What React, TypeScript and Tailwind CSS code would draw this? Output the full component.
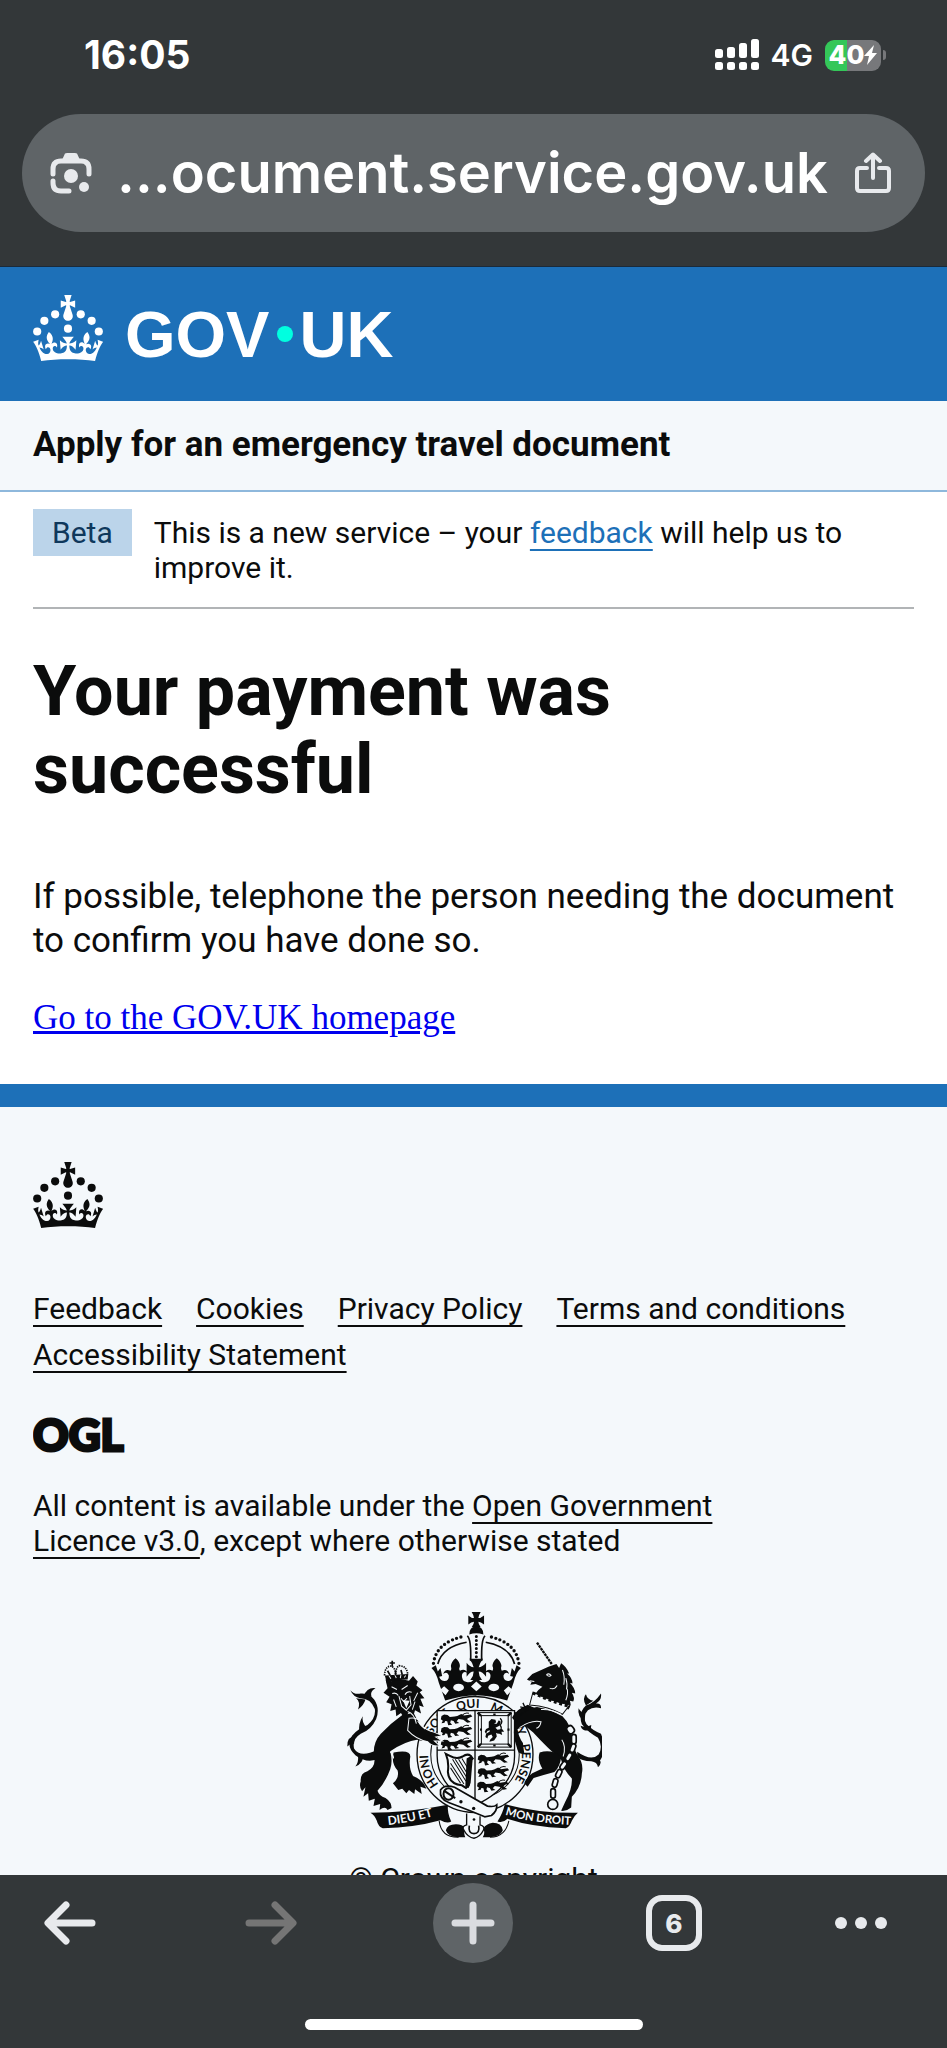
import {ReactNode} from "react";

const footerLinks = ["Feedback", "Cookies", "Privacy Policy", "Terms and conditions", "Accessibility Statement"];

const linkStyle = "underline decoration-2 underline-offset-[6px]";

function Crown() {
    return (
        <svg viewBox="0 0 63.4 60" className="w-[70px] h-[66px] shrink-0" fill="currentColor" aria-hidden="true">
            <circle cx="20" cy="17.6" r="3.7"/>
            <circle cx="10.2" cy="23.5" r="3.7"/>
            <circle cx="3.7" cy="33.2" r="3.7"/>
            <circle cx="31.7" cy="30.6" r="3.7"/>
            <circle cx="43.3" cy="17.6" r="3.7"/>
            <circle cx="53.2" cy="23.5" r="3.7"/>
            <circle cx="59.7" cy="33.2" r="3.7"/>
            <path
                d="M33.1,9.8c.2-.1.3-.3.5-.5l4.6,2.4v-6.8l-4.6,1.5c-.1-.2-.3-.3-.5-.5l1.9-5.9h-6.7l1.9,5.9c-.2.1-.3.3-.5.5l-4.6-1.5v6.8l4.6-2.4c.1.2.3.3.5.5l-2.6,8c-.9,2.8,1.2,5.7,4.1,5.7h0c3,0,5.1-2.9,4.1-5.7l-2.6-8ZM37,37.9s-3.4,3.8-4.1,6.1c2.2,0,4.2-.5,6.4-2.8l-.7,8.5c-2-2.8-4.4-4.1-5.7-3.8.1,3.1.5,6.7,5.8,7.2,3.7.3,6.7-1.5,7-3.8.4-2.6-2-4.3-3.7-1.6-1.4-4.5,2.4-6.1,4.9-3.2-1.9-4.5-1.8-7.7,2.4-10.9,3,4,2.6,7.3-1.2,11.1,2.4-1.3,6.2,0,4,4.6-1.2-2.8-3.7-2.2-4.2.2-.3,1.7.7,3.7,3,4.2,1.9.3,4.7-.9,7-5.9-1.3,0-2.4.7-3.9,1.7l2.4-8c.6,2.3,1.4,3.7,2.2,4.5.6-1.6.5-2.8,0-5.3l5,1.8c-2.6,3.6-5.2,8.7-7.3,17.5-7.4-1.1-15.7-1.7-24.5-1.7h0c-8.8,0-17.1.6-24.5,1.7-2.1-8.9-4.7-13.9-7.3-17.5l5-1.8c-.5,2.5-.6,3.7,0,5.3.8-.8,1.6-2.3,2.2-4.5l2.4,8c-1.5-1-2.6-1.7-3.9-1.7,2.3,5,5.2,6.2,7,5.9,2.3-.4,3.3-2.4,3-4.2-.5-2.4-3-3.1-4.2-.2-2.2-4.6,1.6-6,4-4.6-3.7-3.7-4.2-7.1-1.2-11.1,4.2,3.2,4.3,6.4,2.4,10.9,2.5-2.8,6.3-1.3,4.9,3.2-1.8-2.7-4.1-1-3.7,1.6.3,2.3,3.3,4.1,7,3.8,5.4-.5,5.7-4.2,5.8-7.2-1.3-.2-3.7,1-5.7,3.8l-.7-8.5c2.2,2.3,4.2,2.7,6.4,2.8-.7-2.3-4.1-6.1-4.1-6.1h10.6Z"/>
        </svg>
    );
}

// Small walking lion used in the shield quarters
function Passant({x, y}: { x: number; y: number }) {
    return (
        <g transform={`translate(${x} ${y})`}>
            <path
                d="M0 2l8-4 10 1 7 6 14-1 8-2 12-6 8 5 20-3 5 6-10 3-6 4 4 4 8 5-11 2-12-9-14-2-6 7 8 5-12 2-5-8-8-2-2 7 6 6-12 2-3-12-6-1-2 5-9 2 4-8-6-4z"/>
            <path d="M62 0q8-10 20-6" fill="none" stroke="#0b0c0c" strokeWidth="3"/>
        </g>
    );
}

// Left half of the large crown, mirrored to give the right half
function CrownHalf() {
    return (
        <g>
            <path d="M309 192Q318 128 402 111" fill="none" stroke="#0b0c0c" strokeWidth="10" strokeLinecap="round"
                  strokeDasharray="0 13.5"/>
            <path d="M322 194Q336 142 408 129" fill="none" stroke="#0b0c0c" strokeWidth="5"/>
            <path d="M410 110q12 10 10 74" fill="none" stroke="#0b0c0c" strokeWidth="5"/>
            <path
                d="M437 305V240H430Q421 251 408 248Q392 244 394 226Q398 212 412 222Q404 206 388 214Q384 208 388 200Q388 188 375 177Q362 188 361 200Q364 208 360 214Q344 206 338 224Q350 214 355 228Q356 244 342 245Q331 245 326 232L335 230L330 206L322 216L316 198L303 206Q318 220 325 250L344 303Q390 288 437 287Z"/>
        </g>
    );
}

function RoyalArms() {
    return (
        <svg viewBox="48 36 764 680" className="w-64 h-[228px]" fill="#0b0c0c" role="img"
             aria-label="Royal coat of arms">
            <defs>
                <path id="garter" d="M325 553A140 140 0 1 1 481 596"/>
                <path id="mottoLeft" d="M174 674Q250 666 336 640"/>
                <path id="mottoRight" d="M523 644Q600 668 716 674"/>
            </defs>

            {/* garter belt */}
            <circle cx="433" cy="464" r="173" fill="#f4f8fb" stroke="#0b0c0c" strokeWidth="4"/>
            <text className="font-['Lato'] font-bold text-[36px]">
                <textPath href="#garter" startOffset="0">HONI</textPath>
                <textPath href="#garter" startOffset="155">SOIT</textPath>
                <textPath href="#garter" startOffset="262">QUI</textPath>
                <textPath href="#garter" startOffset="360">MAL</textPath>
                <textPath href="#garter" startOffset="458">Y</textPath>
                <textPath href="#garter" startOffset="505">PENSE</textPath>
            </text>
            <circle cx="433" cy="464" r="132" fill="#f4f8fb" stroke="#0b0c0c" strokeWidth="3"/>

            {/* shield */}
            <path d="M320 333H551V468Q552 560 433 616Q320 560 320 468Z" fill="#f4f8fb" stroke="#0b0c0c"
                  strokeWidth="4"/>
            <path d="M433 333V616M320 451H551" stroke="#0b0c0c" strokeWidth="4"/>
            <Passant x={333} y={347}/>
            <Passant x={333} y={384}/>
            <Passant x={333} y={422}/>
            <Passant x={443} y={467}/>
            <Passant x={443} y={507}/>
            <Passant x={441} y={547}/>
            <rect x="443" y="339" width="98" height="103" fill="none" stroke="#0b0c0c" strokeWidth="3"/>
            <rect x="452" y="348" width="80" height="85" fill="none" stroke="#0b0c0c" strokeWidth="3"/>
            <path d="M441 339l10 10m90-10l-10 10m-90 93l10-10m90 10l-10-10M448 390h6M530 390h6M491 342v6M491 434v6"
                  stroke="#0b0c0c" strokeWidth="7"/>
            <path
                d="M474 366l8-8 12 2 2 8-6 4 8 0 6-10 6 4-4 12-12 6 6 6 14-2 6 8-8 0 2 10-8-4-10-2 2 10-8 12-14 4 2-6 8-8-4-8-10 4-2 8-6-4 2-10 10-6 2-4-8 2-4 8-4-6 4-8 8-4z"/>
            <path d="M500 400Q518 390 508 376Q518 366 508 356" fill="none" stroke="#0b0c0c" strokeWidth="4"/>

            {/* harp */}
            <path d="M346 462l12 6q20 12 38 2 14-10 24-2l6 8-10 8-2 72-8 8-12-8q-40-4-42-40 4-30-6-54z" fill="#f4f8fb"
                  stroke="#0b0c0c" strokeWidth="6"/>
            <path d="M366 478l40 66M360 490l40 62M360 504l30 46M374 478l34 54M384 478l24 40M394 476l16 26"
                  stroke="#0b0c0c" strokeWidth="3"/>
            <path d="M408 476l14-8 4 10-6 70-6 16-10-4z"/>

            {/* crown */}
            <CrownHalf/>
            <g transform="translate(873 0) scale(-1 1)"><CrownHalf/></g>
            <path
                d="M423 39H450Q443 50 443 57Q450 57 460 49V76Q450 68 443 68Q443 76 450 84H423Q430 76 430 68Q422 68 413 76V49Q422 57 430 57Q430 50 423 39Z"/>
            <path d="M416 106Q416 82 437 82Q458 82 458 106Q447 102 437 102Q426 102 416 106Z"/>
            <path d="M437 112V176" stroke="#0b0c0c" strokeWidth="9" strokeLinecap="round" strokeDasharray="0 12"/>
            <path
                d="M416 178H457Q446 192 444 204Q455 203 466 190V232Q455 216 444 216Q444 230 454 242H419Q429 230 429 216Q418 216 408 232V190Q418 203 429 204Q427 192 416 178Z"/>
            <g fill="#f4f8fb">
                <ellipse cx="384" cy="264" rx="16" ry="11"/>
                <ellipse cx="489" cy="264" rx="16" ry="11"/>
                <path d="M437 246l16 15-16 14-16-14zM341 260l14 13-10 14-16-16zM533 260l-14 13 10 14 16-16z"/>
            </g>

            {/* lion */}
            <g>
                <path
                    d="M152 474Q112 494 76 466Q46 438 66 408Q84 386 112 376Q138 356 134 328Q122 296 90 296Q70 292 61 272Q72 286 92 282Q118 280 132 300Q150 326 138 358Q124 390 92 402Q66 418 72 446Q90 476 142 450Z"/>
                <path
                    d="M100 290Q112 262 136 266Q118 276 124 292ZM78 296Q92 306 84 330Q102 316 106 300ZM110 384Q94 368 98 350Q84 372 88 396ZM74 410Q50 410 52 440Q60 430 72 432ZM84 468Q86 488 76 500Q100 490 98 470Z"/>
                <path
                    d="M216 346Q182 370 152 402Q126 430 132 472Q138 500 112 514Q90 520 92 544Q86 560 96 574L106 562L100 590L114 580L116 602L134 596L130 618L150 612L148 630Q165 616 172 630L184 624Q184 606 166 594Q146 586 142 572Q164 550 180 508Q188 484 180 454Q226 424 260 420Q300 430 288 412L270 380L250 340Z"/>
                <path
                    d="M190 458Q240 448 240 470Q234 504 248 528Q278 540 288 566L270 560L274 582L254 568L252 582L236 570L228 580L216 566L204 570L188 550Q208 534 202 512Q182 490 190 458Z"/>
                <path
                    d="M236 356Q268 352 268 372Q286 392 312 398L336 408L316 412L336 424L312 424L328 438Q306 442 292 426Q256 418 232 392Z"
                    stroke="#f4f8fb" strokeWidth="3"/>
                <path
                    d="M166 240L182 246Q206 234 236 244L248 230L262 246L258 258L276 272L268 278L282 296L270 298L280 322L266 318L272 342L254 332L248 352L236 338L222 356L212 340L198 350L196 330L180 334L184 314L168 308L178 292L160 280L172 266Z"/>
                <path
                    d="M184 262l16 8M232 258l-18 12M186 282q12-4 18 6M244 278q-14-4-20 8M206 290l8 30 14 12 14-16-4-26M212 296l8 10 10-10M262 280l-12 24M254 306l-8 24M190 300l8 22"
                    fill="none" stroke="#f4f8fb" strokeWidth="3"/>
                <path d="M218 302l10 24 10-22z" fill="#f4f8fb"/>
                <path
                    d="M164 228l70-4-2 16q-34 0-62 12z"/>
                <path d="M176 228l6 10M194 226l4 10M212 226l-2 10M226 228l-4 6" stroke="#f4f8fb" strokeWidth="3"/>
                <path d="M163 228Q164 200 184 200Q196 208 196 226Q196 206 206 199Q230 200 232 224" fill="none"
                      stroke="#0b0c0c" strokeWidth="5" strokeDasharray="4 3"/>
                <path d="M186 184v18M178 191h16M172 214l8 14M212 212l4 14M196 214v14" stroke="#0b0c0c"
                      strokeWidth="5"/>
                <path d="M232 336q20 6 26 36M180 456q10 8 10 20M262 364q10 16 22 24" fill="none" stroke="#f4f8fb"
                      strokeWidth="3"/>
            </g>

            {/* unicorn */}
            <g>
                <path d="M618 130L662 194" stroke="#0b0c0c" strokeWidth="7" strokeDasharray="8 2"/>
                <path
                    d="M588 240L604 224Q630 212 652 202L676 194L684 206L690 192Q704 200 714 222L708 222Q724 236 724 252L716 250Q732 266 732 282L722 280Q732 296 726 306L716 304Q722 318 712 330L690 322Q664 302 640 296L612 284Q622 270 634 262L614 254L598 256L602 248Z"/>
                <path
                    d="M646 226q8-6 14 2q-6 6-14-2M694 212q8 20 4 44M704 236q6 18 2 34M708 268q4 14-4 34M596 244l14 2M656 266q14 6 22-8"
                    fill="none" stroke="#f4f8fb" strokeWidth="3"/>
                <path
                    d="M606 278q48 26 110 38l-22 28q-40-24-98-28z" fill="#f4f8fb" stroke="#0b0c0c" strokeWidth="3"/>
                <path d="M606 280q48 24 108 40" fill="none" stroke="#0b0c0c" strokeWidth="9" strokeDasharray="9 8"/>
                <path
                    d="M553 352Q576 326 618 322Q660 330 694 350Q720 376 722 410Q724 440 740 468Q758 492 752 520Q750 562 722 590L720 622Q706 634 690 632L702 606Q724 566 722 536Q698 512 690 480Q650 446 606 398L584 380L560 388Q562 410 576 430L580 462Q562 466 558 444Q546 412 550 386Z"/>
                <path
                    d="M626 458Q660 446 690 470Q688 500 670 516Q640 524 608 534L590 560L580 550Q586 532 604 520L634 506Q618 480 626 458Z"/>
                <path d="M546 354Q558 330 590 318L604 324Q570 336 556 366ZM576 310l10 22M568 322l24 6" stroke="#0b0c0c"
                      strokeWidth="4"/>
                <path d="M566 384Q600 360 630 366Q628 382 616 386M696 470Q706 440 692 420M690 344q-30-16-60-14"
                      fill="none" stroke="#f4f8fb" strokeWidth="3"/>
                <path
                    d="M738 456Q780 486 802 464Q816 440 800 414Q770 398 752 374Q740 340 764 318Q790 310 809 282Q812 302 794 312Q810 310 809 326Q786 320 770 332Q752 350 766 374Q786 394 809 402Q828 450 806 482Q812 490 800 502Q798 486 780 484Q750 484 738 470Z"/>
                <path
                    d="M764 318Q752 296 764 284Q768 300 786 304ZM760 364Q738 352 742 326Q750 340 762 344ZM778 392Q752 396 748 378Q764 384 780 376Z"/>
            </g>

            {/* chain */}
            <g fill="#f4f8fb" stroke="#0b0c0c" strokeWidth="5">
                <rect x="708" y="378" width="20" height="24" rx="9" transform="rotate(-35 718 390)"/>
                <rect x="721" y="404" width="14" height="28" rx="7"/>
                <rect x="718" y="432" width="14" height="26" rx="7" transform="rotate(20 725 445)"/>
                <rect x="706" y="458" width="14" height="26" rx="7" transform="rotate(30 713 471)"/>
                <rect x="690" y="484" width="14" height="26" rx="7" transform="rotate(35 697 497)"/>
                <rect x="676" y="508" width="14" height="26" rx="7" transform="rotate(25 683 521)"/>
                <rect x="665" y="536" width="14" height="26" rx="7" transform="rotate(15 672 549)"/>
                <rect x="659" y="566" width="14" height="28" rx="7"/>
                <circle cx="665" cy="613" r="15" fill="none"/>
            </g>

            {/* belt buckle */}
            <path
                d="M330 570Q342 552 372 562L470 618Q490 622 498 614Q500 632 482 646L462 650Q420 632 356 608Q326 598 330 570Z"
                fill="#f4f8fb" stroke="#0b0c0c" strokeWidth="5"/>
            <ellipse cx="354" cy="582" rx="15" ry="17" fill="none" stroke="#0b0c0c" strokeWidth="6"/>
            <path d="M340 572l34 22" stroke="#0b0c0c" strokeWidth="6"/>
            <circle cx="391" cy="605" r="5"/>
            <circle cx="429" cy="625" r="5"/>

            {/* motto ribbon */}
            <path
                d="M121 638Q230 638 352 614Q350 640 362 664Q350 672 330 660Q250 682 158 684Q144 680 140 662Q134 646 121 638Z"/>
            <path
                d="M522 612Q620 640 740 638Q728 648 722 662Q716 680 704 684Q600 680 530 656Q516 670 500 664Q516 640 522 612Z"/>
            <path
                d="M346 690Q350 672 376 672Q396 672 404 684Q398 700 404 711H384Q352 710 346 690ZM516 690Q512 668 486 668Q466 672 458 684Q464 700 456 711H478Q510 708 516 690Z"/>
            <path d="M326 662Q332 712 384 711M534 662Q524 710 478 711" fill="none" stroke="#0b0c0c"
                  strokeWidth="3"/>
            <path d="M408 640v34q-16 4-8 16 12 22 30 24 18-4 28-24 6-12-10-16v-26" fill="#f4f8fb" stroke="#0b0c0c"
                  strokeWidth="4"/>
            <path d="M416 676q-4 24 14 24t14-24" fill="none" stroke="#0b0c0c" strokeWidth="5"/>
            <circle cx="430" cy="658" r="4"/>
            <g className="font-['Lato'] font-bold text-[36px]" fill="#f4f8fb">
                <text>
                    <textPath href="#mottoLeft">DIEU ET</textPath>
                </text>
                <text className="text-[34px]">
                    <textPath href="#mottoRight">MON DROIT</textPath>
                </text>
            </g>
        </svg>
    );
}

function Signal() {
    return (
        <svg viewBox="0 0 44 32" className="w-11 h-8" fill="#fff" aria-label="Signal">
            <rect x="0" y="10" width="8" height="9" rx="2.5"/>
            <rect x="12" y="8" width="8" height="11" rx="2.5"/>
            <rect x="24" y="4" width="8" height="15" rx="2.5"/>
            <rect x="36" y="0" width="8" height="19" rx="2.5"/>
            <rect x="0" y="23" width="8" height="8" rx="2.5"/>
            <rect x="12" y="23" width="8" height="8" rx="2.5"/>
            <rect x="24" y="23" width="8" height="8" rx="2.5"/>
            <rect x="36" y="23" width="8" height="8" rx="2.5"/>
        </svg>
    );
}

function StatusBar() {
    return (
        <div className="flex items-center justify-between h-[108px] pl-[84px] pr-[61px] text-white">
            <span className="text-[39px] font-bold">16:05</span>
            <div className="flex items-center">
                <Signal/>
                <span className="ml-3 text-[30px] font-semibold">4G</span>
                <div
                    className="flex items-center justify-center w-14 h-[31px] ml-3 rounded-[9px] bg-linear-to-r from-[#34c759] from-40% to-[#77787b] to-40%">
                    <span className="text-[26px] leading-none font-extrabold">40</span>
                    <svg viewBox="0 0 13 20" className="w-[13px] h-5" fill="#fff">
                        <path d="M10 0L0 11h5L3 20L13 8H8z"/>
                    </svg>
                </div>
                <div className="w-[3px] h-[10px] ml-[2px] rounded-r-full bg-[#77787b]"/>
            </div>
        </div>
    );
}

function AddressBar() {
    return (
        <div
            className="flex items-center justify-between h-[118px] mx-[22px] pl-7 pr-8 rounded-full bg-[#5f6467] text-[#e8eaed]">
            <button aria-label="Search with camera">
                <svg viewBox="0 0 42 42" className="w-[42px] h-[42px]" fill="none" stroke="currentColor"
                     strokeWidth="5" strokeLinecap="round">
                    <path d="M3 22V17Q3 9 11 9H31Q39 9 39 17V22M3 29V31Q3 39 11 39H19"/>
                    <path d="M12 8L15 1.500Q16 1 17 1H25Q26 1 27 1.500L30 8Z" fill="currentColor" stroke="none"/>
                    <circle cx="21" cy="24" r="7" fill="currentColor" stroke="none"/>
                    <circle cx="34" cy="35" r="5" fill="currentColor" stroke="none"/>
                </svg>
            </button>
            <span className="text-[56px] leading-none font-semibold text-white">...ocument.service.gov.uk</span>
            <button aria-label="Share">
                <svg viewBox="0 0 40 42" className="w-10 h-[42px]" fill="none" stroke="currentColor" strokeWidth="4"
                     strokeLinecap="round" strokeLinejoin="round">
                    <path d="M14 16H7Q4 16 4 19V36Q4 39 7 39H33Q36 39 36 36V19Q36 16 33 16H26"/>
                    <path d="M20 26V3M13 9L20 2.500L27 9"/>
                </svg>
            </button>
        </div>
    );
}

function NavButton({label, className = "", children}: { label: string; className?: string; children: ReactNode }) {
    return (
        <button aria-label={label} className={`flex items-center justify-center h-20 ${className}`}>
            {children}
        </button>
    );
}

function BottomBar() {
    return (
        <nav className="flex flex-col items-center shrink-0 h-[173px] pt-2 pb-[18px] bg-[#333739]">
            <div className="flex items-center justify-between w-full pl-[30px] pr-[60px]">
                <NavButton label="Back" className="w-20 text-[#e8eaed]">
                    <svg viewBox="0 0 52 44" className="w-[52px] h-11" fill="none" stroke="currentColor"
                         strokeWidth="7" strokeLinecap="round" strokeLinejoin="round">
                        <path d="M48 22H5M22 4L4 22L22 40"/>
                    </svg>
                </NavButton>
                <NavButton label="Forward" className="w-20 text-[#757575]">
                    <svg viewBox="0 0 52 44" className="w-[52px] h-11" fill="none" stroke="currentColor"
                         strokeWidth="7" strokeLinecap="round" strokeLinejoin="round">
                        <path d="M4 22H47M30 4L48 22L30 40"/>
                    </svg>
                </NavButton>
                <NavButton label="New tab" className="w-20 rounded-full bg-[#5f6467] text-[#dadce0]">
                    <svg viewBox="0 0 44 44" className="w-11 h-11" stroke="currentColor" strokeWidth="7"
                         strokeLinecap="round">
                        <path d="M22 4V40M4 22H40"/>
                    </svg>
                </NavButton>
                <NavButton label="Tabs" className="w-20 text-[#e8eaed]">
                    <span
                        className="flex items-center justify-center w-14 h-14 border-[6px] border-current rounded-2xl text-[26px] font-extrabold">6</span>
                </NavButton>
                <NavButton label="More" className="text-[#e8eaed]">
                    <svg viewBox="0 0 52 12" className="w-[52px] h-3" fill="currentColor">
                        <circle cx="6" cy="6" r="6"/>
                        <circle cx="26" cy="6" r="6"/>
                        <circle cx="46" cy="6" r="6"/>
                    </svg>
                </NavButton>
            </div>
            <div className="w-[338px] h-[11px] mt-auto rounded-full bg-white"/>
        </nav>
    );
}

export default function App() {
    return (
        <div className="flex flex-col h-screen overflow-hidden bg-white font-['Inter',sans-serif] text-[#0b0c0c]">
            <div className="shrink-0 h-[267px] pt-[1px] bg-[#333739] border-b border-[#1b2a3a]">
                <StatusBar/>
                <div className="pt-[5px]"><AddressBar/></div>
            </div>

            <div className="flex-1 min-h-0 overflow-hidden font-['Roboto',sans-serif]">
                <header>
                    <div className="flex items-center h-[134px] px-[33px] pb-3 bg-[#1d70b8] text-white">
                        <a href="#" aria-label="GOV.UK" className="flex items-center gap-[22px]">
                            <Crown/>
                            <span
                                className="flex items-center pt-3 font-['Liberation_Sans',sans-serif] font-bold text-[65px] leading-none">
                                GOV<span className="w-4 h-4 ml-2 mr-[6px] rounded-full bg-[#00ffe0]"/>UK
                            </span>
                        </a>
                    </div>
                    <div className="flex items-center h-[91px] px-[33px] bg-[#f4f8fb] border-b-2 border-[#8eb8dc]">
                        <span className="font-bold text-[35px]">
                            Apply for an emergency travel document
                        </span>
                    </div>
                </header>

                <main className="px-[33px] pt-[17px] pb-[46px]">
                    <div className="flex items-start gap-[22px] pb-[22px] border-b-2 border-[#b1b4b6] text-[30px]">
                        <strong
                            className="shrink-0 px-[19px] bg-[#bbd4ea] text-[#0f385c] leading-[47px] font-normal">Beta</strong>
                        <p className="pt-[6px] leading-[35px]">
                            This is a new service – your <a href="#"
                                                            className={`text-[#1d70b8] ${linkStyle}`}>feedback</a> will
                            help us to improve it.
                        </p>
                    </div>
                    <h1 className="max-w-[700px] mt-[43px] font-bold text-[70px] leading-[78px]">
                        Your payment was successful
                    </h1>
                    <p className="mt-[67px] text-[35px] leading-[44px]">
                        If possible, telephone the person needing the document to confirm you have done so.
                    </p>
                    <a href="#"
                       className="block w-fit mt-[35px] font-['Liberation_Serif',serif] text-[35px] leading-10 text-[#0000ee] underline">
                        Go to the GOV.UK homepage
                    </a>
                </main>

                <footer className="px-[33px] pt-[55px] bg-[#f4f8fb] border-t-[23px] border-[#1d70b8] text-[30px]">
                    <Crown/>
                    <ul className="flex flex-wrap gap-x-[34px] mt-[58px] leading-[46px]">
                        {footerLinks.map((name) =>
                            <li key={name}><a href="#" className={linkStyle}>{name}</a></li>)}
                    </ul>
                    <svg viewBox="0 0 96 37" className="w-24 h-[37px] mt-[38px]" fill="currentColor"
                         stroke="currentColor" strokeWidth="3">
                        <text x="0" y="35" className="font-['Lato'] font-black text-[44px]">OGL</text>
                    </svg>
                    <p className="max-w-[720px] mt-[35px] leading-[35px]">
                        All content is available under the <a href="#" className={linkStyle}>Open Government
                        Licence v3.0</a>, except where otherwise stated
                    </p>
                    <div className="flex flex-col items-center mt-[53px] leading-[35px]">
                        <RoyalArms/>
                        <a href="#" className="mt-[22px] whitespace-nowrap">© Crown copyright</a>
                    </div>
                </footer>
            </div>

            <BottomBar/>
        </div>
    );
}
